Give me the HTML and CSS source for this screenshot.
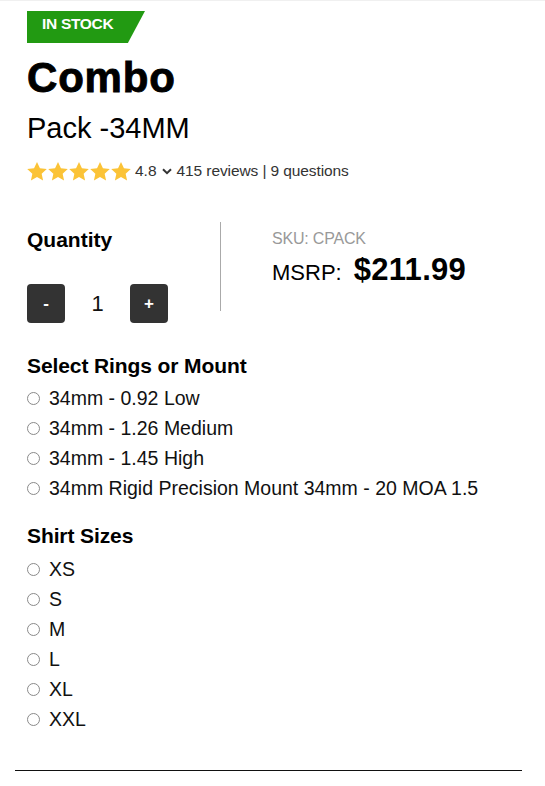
FILE: index.html
```html
<!DOCTYPE html>
<html lang="en">
<head>
<meta charset="utf-8">
<title>Combo Pack -34MM</title>
<link rel="stylesheet" href="styles.css">
</head>
<body>
<div class="page">
  <div class="product">
    <div class="badge"><span>IN STOCK</span></div>
    <h1 class="title">Combo</h1>
    <div class="subtitle">Pack -34MM</div>
    <div class="rating">
      <div class="stars">
        <svg viewBox="1.5 1.5 21 20"><path d="M12 1.5l3.1 6.6 7.2.8-5.4 4.9 1.5 7.1L12 17.3l-6.4 3.6 1.5-7.1L1.7 8.9l7.2-.8z"/></svg>
        <svg viewBox="1.5 1.5 21 20"><path d="M12 1.5l3.1 6.6 7.2.8-5.4 4.9 1.5 7.1L12 17.3l-6.4 3.6 1.5-7.1L1.7 8.9l7.2-.8z"/></svg>
        <svg viewBox="1.5 1.5 21 20"><path d="M12 1.5l3.1 6.6 7.2.8-5.4 4.9 1.5 7.1L12 17.3l-6.4 3.6 1.5-7.1L1.7 8.9l7.2-.8z"/></svg>
        <svg viewBox="1.5 1.5 21 20"><path d="M12 1.5l3.1 6.6 7.2.8-5.4 4.9 1.5 7.1L12 17.3l-6.4 3.6 1.5-7.1L1.7 8.9l7.2-.8z"/></svg>
        <svg viewBox="1.5 1.5 21 20"><path d="M12 1.5l3.1 6.6 7.2.8-5.4 4.9 1.5 7.1L12 17.3l-6.4 3.6 1.5-7.1L1.7 8.9l7.2-.8z"/></svg>
      </div>
      <span class="score">4.8</span>
      <svg class="chev" viewBox="0 0 10 7"><path d="M1 1.2l4 4 4-4"/></svg>
      <span class="counts">415 reviews | 9 questions</span>
    </div>

    <div class="buy">
      <div class="qty">
        <div class="qty-label">Quantity</div>
        <div class="qty-ctrl">
          <button class="qbtn">-</button>
          <span class="qval">1</span>
          <button class="qbtn">+</button>
        </div>
      </div>
      <div class="price">
        <div class="sku">SKU: CPACK</div>
        <div class="msrp"><span class="msrp-label">MSRP:</span> <span class="amount">$211.99</span></div>
      </div>
    </div>

    <div class="group">
      <h2 class="group-title">Select Rings or Mount</h2>
      <label class="opt"><span class="radio"></span>34mm - 0.92 Low</label>
      <label class="opt"><span class="radio"></span>34mm - 1.26 Medium</label>
      <label class="opt"><span class="radio"></span>34mm - 1.45 High</label>
      <label class="opt"><span class="radio"></span>34mm Rigid Precision Mount 34mm - 20 MOA 1.5</label>
    </div>

    <div class="group sizes">
      <h2 class="group-title">Shirt Sizes</h2>
      <label class="opt"><span class="radio"></span>XS</label>
      <label class="opt"><span class="radio"></span>S</label>
      <label class="opt"><span class="radio"></span>M</label>
      <label class="opt"><span class="radio"></span>L</label>
      <label class="opt"><span class="radio"></span>XL</label>
      <label class="opt"><span class="radio"></span>XXL</label>
    </div>
  </div>
  <hr class="rule">
</div>
</body>
</html>
```
FILE: styles.css
```css
* { box-sizing: border-box; }
html, body { margin: 0; padding: 0; background: #fff; }
body {
  font-family: "Liberation Sans", Arial, sans-serif;
  color: #000;
  width: 545px;
  height: 786px;
  overflow: hidden;
}
.page {
  border-top: 1px solid #f0f0f0;
  padding-top: 10px;
}
.product { padding: 0 23px 0 27px; }

.badge {
  width: 118px;
  height: 32px;
  background: #229a12;
  clip-path: polygon(0 0, 100% 0, 85.5% 100%, 0 100%);
  display: flex;
  align-items: center;
  padding: 0 0 6px 15px;
}
.badge span {
  color: #fff;
  font-weight: 700;
  font-size: 15.5px;
  letter-spacing: -0.3px;
}

.title {
  margin: 12px 0 0;
  font-size: 42px;
  line-height: 46px;
  font-weight: 900;
  letter-spacing: 0.8px;
  -webkit-text-stroke: 0.9px #000;
}
.subtitle {
  margin-top: 10px;
  font-size: 29px;
  line-height: 34px;
}

.rating {
  margin-top: 16px;
  display: flex;
  align-items: center;
  height: 20px;
  font-size: 15.5px;
  color: #333;
}
.stars { display: flex; gap: 1px; }
.stars svg { width: 20px; height: 19px; fill: #fbc337; display: block; }
.score { margin-left: 4px; }
.chev {
  width: 10px; height: 7px;
  margin: 1px 5px 0 5px;
  fill: none; stroke: #333; stroke-width: 2;
}
.counts { letter-spacing: -0.1px; }

.buy {
  margin-top: 41px;
  display: flex;
}
.qty {
  width: 194px;
  height: 89px;
  border-right: 1px solid #aaa;
  padding-top: 6px;
}
.qty-label {
  font-size: 21px;
  font-weight: 700;
  line-height: 24px;
}
.qty-ctrl {
  margin-top: 32px;
  display: flex;
  align-items: center;
}
.qbtn {
  width: 38px;
  height: 39px;
  border: none;
  border-radius: 4px;
  background: #333;
  color: #fff;
  font-family: "Liberation Sans", Arial, sans-serif;
  font-size: 17px;
  font-weight: 700;
  padding: 0;
}
.qval {
  width: 65px;
  text-align: center;
  font-size: 22px;
  font-weight: 300;
  color: #111;
}
.price {
  padding-left: 51px;
  padding-top: 8px;
}
.sku {
  color: #999;
  font-size: 16px;
  line-height: 18px;
  letter-spacing: -0.2px;
}
.msrp {
  margin-top: 4px;
  display: flex;
  align-items: baseline;
  gap: 12px;
}
.msrp-label { font-size: 22px; }
.amount { font-size: 31px; font-weight: 700; letter-spacing: 0.3px; }

.group { margin-top: 43px; }
.sizes { margin-top: 21px; }
.group-title {
  margin: 0 0 5px;
  font-size: 21px;
  line-height: 24px;
  font-weight: 700;
  letter-spacing: -0.1px;
}
.sizes .group-title { margin-bottom: 6px; }
.opt {
  display: flex;
  align-items: center;
  height: 30px;
  font-size: 19.5px;
  color: #111;
}
.radio {
  width: 13px;
  height: 13px;
  border: 1px solid #8a8a8a;
  border-radius: 50%;
  margin-right: 9px;
  flex: none;
}

.rule {
  margin: 36px 23px 0 15px;
  border: none;
  border-top: 1px solid #111;
  height: 0;
}
```
